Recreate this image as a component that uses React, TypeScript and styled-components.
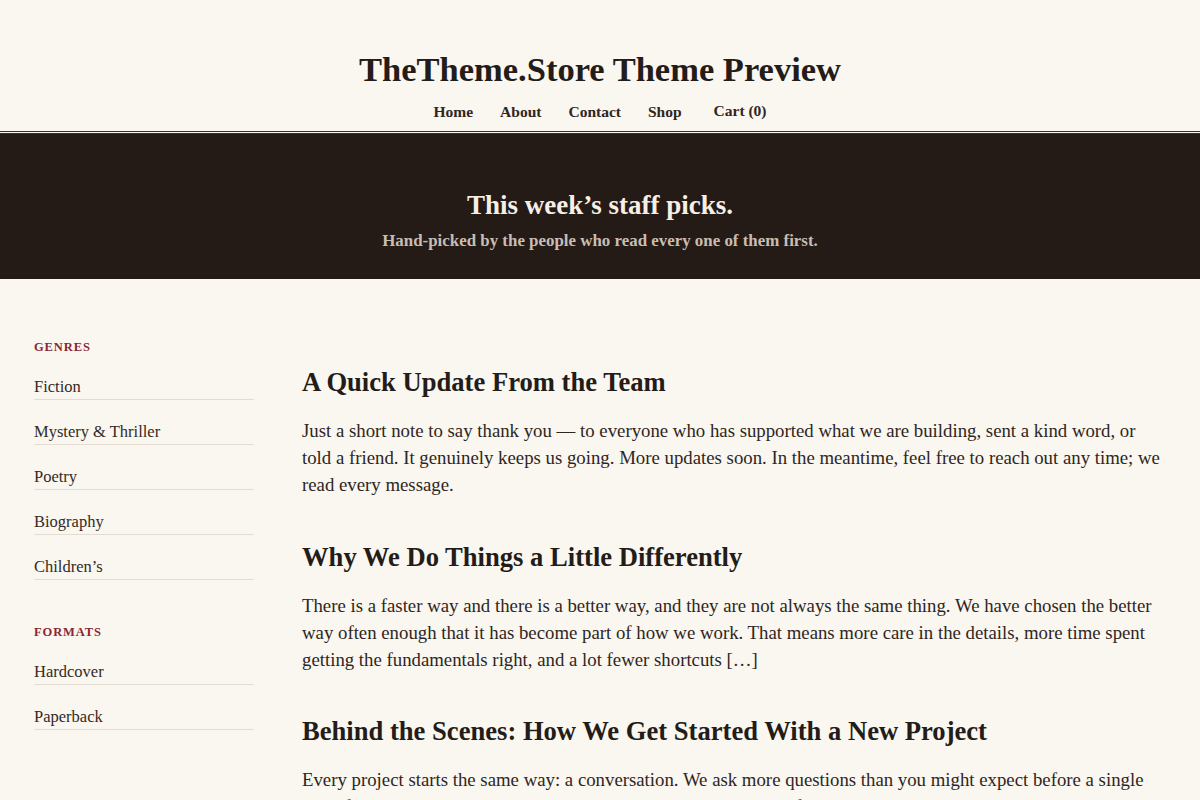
import React from 'react';
import styled, { createGlobalStyle } from 'styled-components';

const GlobalStyle = createGlobalStyle`
  * { box-sizing: border-box; }
  body {
    margin: 0;
    background: #faf6f0;
    color: #231c18;
    font-family: "Liberation Serif", "Times New Roman", serif;
  }
`;

const Header = styled.header`
  padding: 47px 34px 0;
  text-align: center;
  border-bottom: 3px double #3a302a;
`;

const SiteTitle = styled.h1`
  margin: 0;
  font-size: 34.5px;
  font-weight: 700;
  line-height: 44px;
  color: #231c18;
`;

const Nav = styled.nav`
  display: flex;
  justify-content: center;
  align-items: center;
  gap: 27px;
  padding: 11px 0 9px;
  line-height: 20px;
`;

const NavLink = styled.a<{ $cart?: boolean }>`
  font-size: 15.5px;
  font-weight: 700;
  color: #2e2622;
  text-decoration: none;
  margin-left: ${p => (p.$cart ? '5px' : '0')};
  position: relative;
  top: ${p => (p.$cart ? '-1px' : '0')};
`;

const Banner = styled.section`
  background: #241a16;
  color: #f6efe6;
  text-align: center;
  padding: 54px 34px 27px;
`;

const BannerTitle = styled.h2`
  margin: 0;
  font-size: 27px;
  font-weight: 700;
  line-height: 34px;
`;

const BannerSub = styled.p`
  margin: 8px 0 0;
  font-size: 16.9px;
  line-height: 22px;
  font-weight: 700;
  color: #c8bdb2;
`;

const Layout = styled.div`
  display: grid;
  grid-template-columns: 220px 1fr;
  gap: 48px;
  padding: 60px 34px 40px;
`;

const Sidebar = styled.aside`
  display: flex;
  flex-direction: column;
  gap: 44px;
`;

const Group = styled.div``;

const GroupTitle = styled.h3`
  margin: 0;
  font-size: 12.5px;
  line-height: 16px;
  font-weight: 700;
  letter-spacing: 0.9px;
  text-transform: uppercase;
  color: #8a2634;
`;

const List = styled.ul`
  list-style: none;
  margin: 0;
  padding: 0;
`;

const Item = styled.li`
  font-size: 16.5px;
  line-height: 24px;
  padding: 20px 0 0;
  border-bottom: 1px solid #e4dcd0;
  color: #332a25;
`;

const Main = styled.main`
  padding-top: 26px;
  display: flex;
  flex-direction: column;
  gap: 41.5px;
  min-width: 0;
`;

const Post = styled.article``;

const PostTitle = styled.h2`
  margin: 0 0 18px;
  font-size: 26.6px;
  font-weight: 700;
  line-height: 34px;
  color: #231c18;
`;

const PostBody = styled.p`
  margin: 0;
  font-size: 18.8px;
  line-height: 27px;
  color: #2e2622;
`;

const genres = ['Fiction', 'Mystery & Thriller', 'Poetry', 'Biography', 'Children’s'];
const formats = ['Hardcover', 'Paperback'];

const posts = [
  {
    title: 'A Quick Update From the Team',
    body: 'Just a short note to say thank you — to everyone who has supported what we are building, sent a kind word, or told a friend. It genuinely keeps us going. More updates soon. In the meantime, feel free to reach out any time; we read every message.',
  },
  {
    title: 'Why We Do Things a Little Differently',
    body: 'There is a faster way and there is a better way, and they are not always the same thing. We have chosen the better way often enough that it has become part of how we work. That means more care in the details, more time spent getting the fundamentals right, and a lot fewer shortcuts […]',
  },
  {
    title: 'Behind the Scenes: How We Get Started With a New Project',
    body: 'Every project starts the same way: a conversation. We ask more questions than you might expect before a single line of work begins, because understanding the problem is most of the job […]',
  },
];

export default function App() {
  return (
    <>
      <GlobalStyle />
      <Header>
        <SiteTitle>TheTheme.Store Theme Preview</SiteTitle>
        <Nav>
          <NavLink href="#">Home</NavLink>
          <NavLink href="#">About</NavLink>
          <NavLink href="#">Contact</NavLink>
          <NavLink href="#">Shop</NavLink>
          <NavLink href="#" $cart>Cart (0)</NavLink>
        </Nav>
      </Header>
      <Banner>
        <BannerTitle>This week’s staff picks.</BannerTitle>
        <BannerSub>Hand-picked by the people who read every one of them first.</BannerSub>
      </Banner>
      <Layout>
        <Sidebar>
          <Group>
            <GroupTitle>Genres</GroupTitle>
            <List>
              {genres.map(g => <Item key={g}>{g}</Item>)}
            </List>
          </Group>
          <Group>
            <GroupTitle>Formats</GroupTitle>
            <List>
              {formats.map(f => <Item key={f}>{f}</Item>)}
            </List>
          </Group>
        </Sidebar>
        <Main>
          {posts.map(p => (
            <Post key={p.title}>
              <PostTitle>{p.title}</PostTitle>
              <PostBody>{p.body}</PostBody>
            </Post>
          ))}
        </Main>
      </Layout>
    </>
  );
}
